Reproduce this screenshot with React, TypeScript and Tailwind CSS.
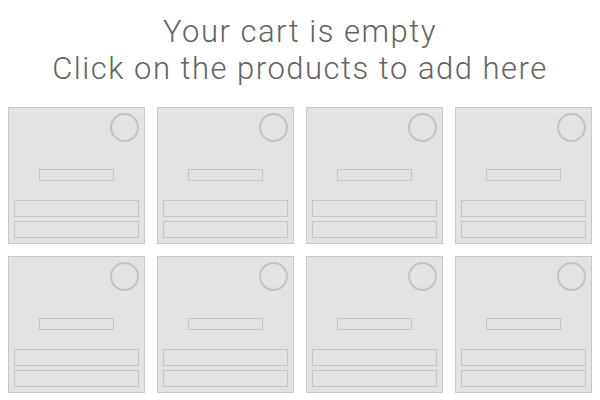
import React from 'react';

// empty cart placeholder: heading + 8 skeleton product cards
const SLOTS = Array.from({ length: 8 }, (_, i) => i);

function SlotCard() {
  return (
    <div className="flex h-[137px] w-[137px] flex-col border border-[#c9c9c9] bg-[#e3e3e3] px-[5px] pb-[5px] pt-[5px]">
      <div className="flex justify-end">
        <span className="block h-[29px] w-[29px] rounded-full border-2 border-[#c3c3c3]" />
      </div>
      <div className="mt-[27px] flex justify-center">
        <span className="block h-[12px] w-[75px] border border-[#c6c6c6]" />
      </div>
      <div className="mt-auto flex flex-col gap-[4px]">
        <span className="block h-[17px] w-full border border-[#c6c6c6]" />
        <span className="block h-[17px] w-full border border-[#c6c6c6]" />
      </div>
    </div>
  );
}

export default function App() {
  return (
    <main className="h-[400px] w-[600px] overflow-hidden bg-white">
      <header className="pt-[13px] text-center font-['Roboto',sans-serif] text-[31px] font-light leading-[37px] tracking-[1.5px] text-[#646464]">
        <p>Your cart is empty</p>
        <p>Click on the products to add here</p>
      </header>
      <section className="mt-[20px] grid grid-cols-[repeat(4,137px)] gap-x-[12px] gap-y-[12px] pl-[8px]">
        {SLOTS.map((i) => (
          <SlotCard key={i} />
        ))}
      </section>
    </main>
  );
}
